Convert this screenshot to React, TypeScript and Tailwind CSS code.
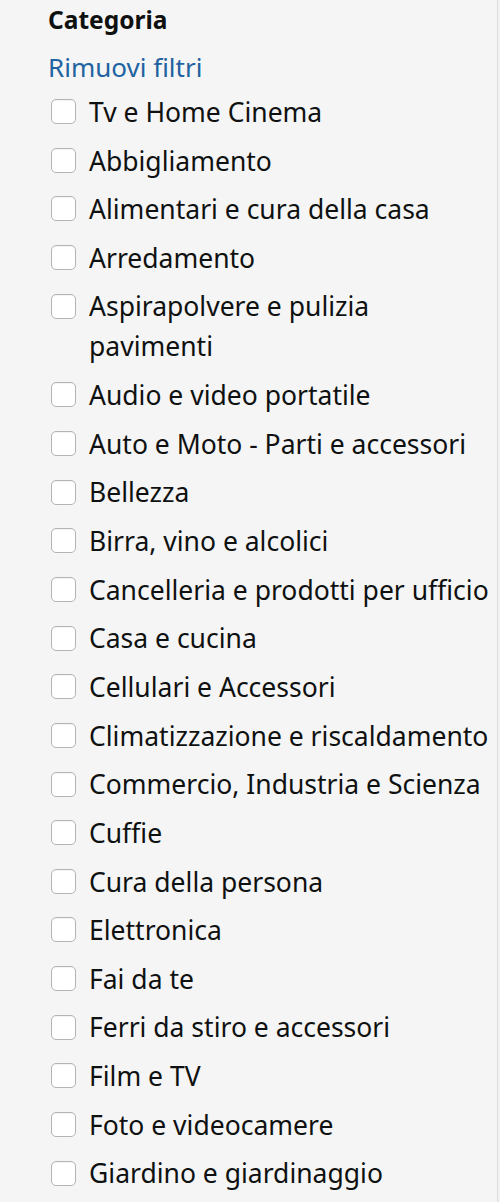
const categories = [
  'Tv e Home Cinema',
  'Abbigliamento',
  'Alimentari e cura della casa',
  'Arredamento',
  'Aspirapolvere e pulizia pavimenti',
  'Audio e video portatile',
  'Auto e Moto - Parti e accessori',
  'Bellezza',
  'Birra, vino e alcolici',
  'Cancelleria e prodotti per ufficio',
  'Casa e cucina',
  'Cellulari e Accessori',
  'Climatizzazione e riscaldamento',
  'Commercio, Industria e Scienza',
  'Cuffie',
  'Cura della persona',
  'Elettronica',
  'Fai da te',
  'Ferri da stiro e accessori',
  'Film e TV',
  'Foto e videocamere',
  'Giardino e giardinaggio',
];

export default function App() {
  return (
    <div className="h-[1202px] w-[500px] overflow-hidden bg-[#f2f2f2]" style={{ fontFamily: '"Noto Sans", "Open Sans", sans-serif' }}>
      <div className="h-full w-[498px] border-r border-[#dddddd] bg-[#f5f5f5] pl-[48px] pr-[4px] pt-[1.5px]">
        <h2 className="text-[24.5px] font-bold leading-[36px] text-[#0f1111]">Categoria</h2>
        <a className="mt-[9.4px] block text-[26px] leading-[40px] text-[#2162a1]">Rimuovi filtri</a>
        <ul className="mt-[5px] flex flex-col gap-[8.65px]">
          {categories.map((c) => (
            <li key={c} className="flex items-start">
              <span className="mt-[7.3px] ml-[3px] mr-[13px] h-[25px] w-[25px] shrink-0 rounded-[5px] border border-[#b4b4b4] bg-white shadow-[inset_0_1px_1px_rgba(0,0,0,0.05)]" />
              <span className="text-[26.5px] leading-[40px] text-[#0f1111]">{c}</span>
            </li>
          ))}
        </ul>
      </div>
    </div>
  );
}
